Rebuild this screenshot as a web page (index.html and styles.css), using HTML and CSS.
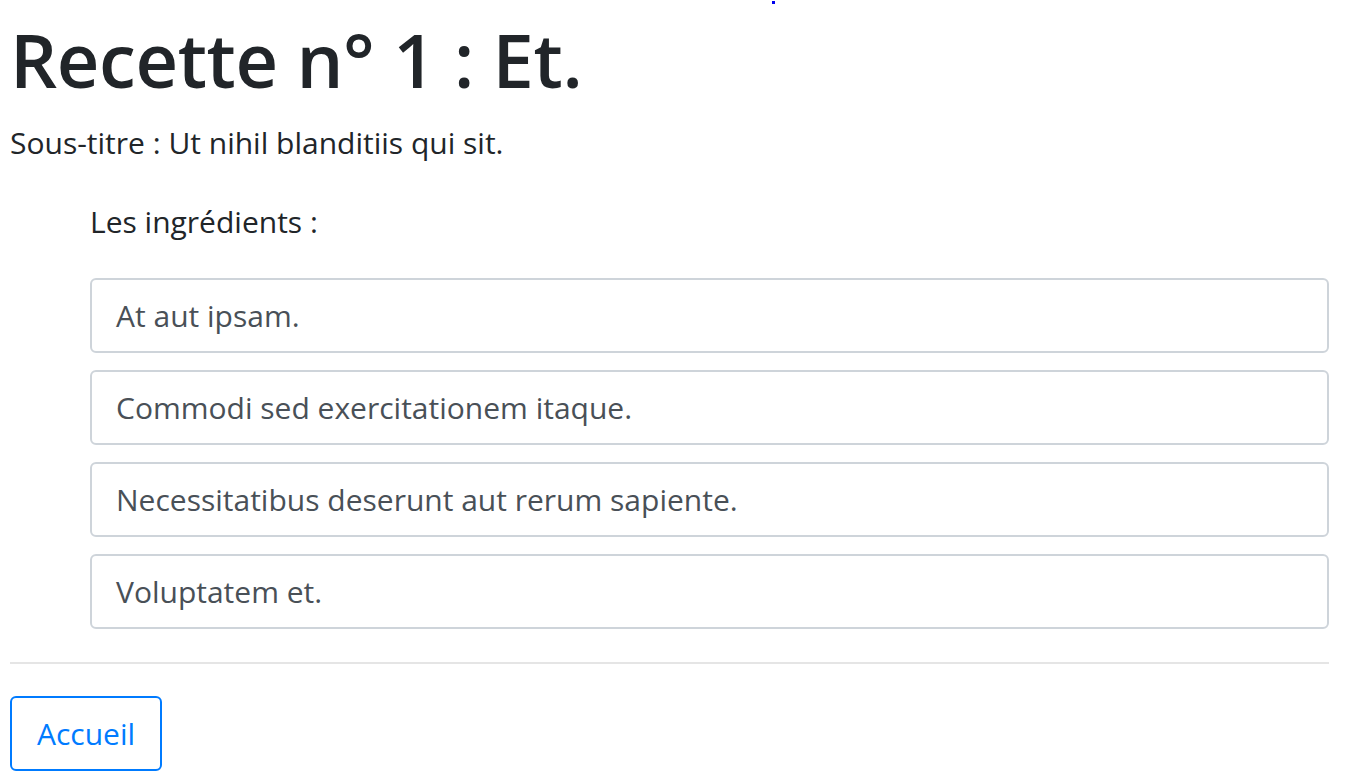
FILE: index.html
```html
<!DOCTYPE html>
<html lang="fr">
<head>
<meta charset="utf-8">
<title>Recette n° 1 : Et.</title>
<link rel="stylesheet" href="styles.css">
</head>
<body>
<span class="stray-dot" aria-hidden="true"></span>
<main class="page">
  <h1 class="title">Recette n° 1 : Et.</h1>
  <p class="subtitle">Sous-titre : Ut nihil blanditiis qui sit.</p>
  <section class="ingredients">
    <p class="ingredients-label">Les ingrédients :</p>
    <ul class="ingredient-list">
      <li class="ingredient">At aut ipsam.</li>
      <li class="ingredient">Commodi sed exercitationem itaque.</li>
      <li class="ingredient">Necessitatibus deserunt aut rerum sapiente.</li>
      <li class="ingredient">Voluptatem et.</li>
    </ul>
  </section>
  <hr class="divider">
  <a class="btn-home" href="#">Accueil</a>
</main>
</body>
</html>
```
FILE: styles.css
```css
html, body {
  margin: 0;
  padding: 0;
  background: #ffffff;
}
body {
  font-family: "Open Sans", "Noto Sans", sans-serif;
  color: #212529;
  position: relative;
}
.stray-dot {
  position: absolute;
  left: 772px;
  top: 1px;
  width: 3px;
  height: 3px;
  background: #0000ee;
}
.page {
  padding: 0 24px 0 10px;
  display: flex;
  flex-direction: column;
  align-items: flex-start;
}
.title {
  margin: 15px 0 0 0;
  font-size: 74px;
  font-weight: 600;
  line-height: 89px;
  letter-spacing: -0.4px;
  color: #212529;
}
.subtitle {
  margin: 21px 0 0 0;
  font-size: 30px;
  line-height: 36px;
}
.ingredients {
  align-self: stretch;
  padding-left: 80px;
}
.ingredients-label {
  margin: 43px 0 0 0;
  font-size: 30px;
  line-height: 36px;
}
.ingredient-list {
  list-style: none;
  margin: 38px 0 0 0;
  padding: 0;
  display: flex;
  flex-direction: column;
  gap: 17px;
}
.ingredient {
  box-sizing: border-box;
  height: 75px;
  border: 2px solid #ced4da;
  border-radius: 6px;
  padding: 0 24px;
  display: flex;
  align-items: center;
  font-size: 30px;
  color: #495057;
}
.divider {
  align-self: stretch;
  margin: 33px 0 0 0;
  border: 0;
  border-top: 2px solid #e5e5e5;
  height: 0;
}
.btn-home {
  margin-top: 32px;
  box-sizing: border-box;
  height: 75px;
  width: 152px;
  border: 2px solid #007bff;
  border-radius: 6px;
  display: flex;
  align-items: center;
  justify-content: center;
  font-size: 30px;
  color: #007bff;
  text-decoration: none;
}
```
